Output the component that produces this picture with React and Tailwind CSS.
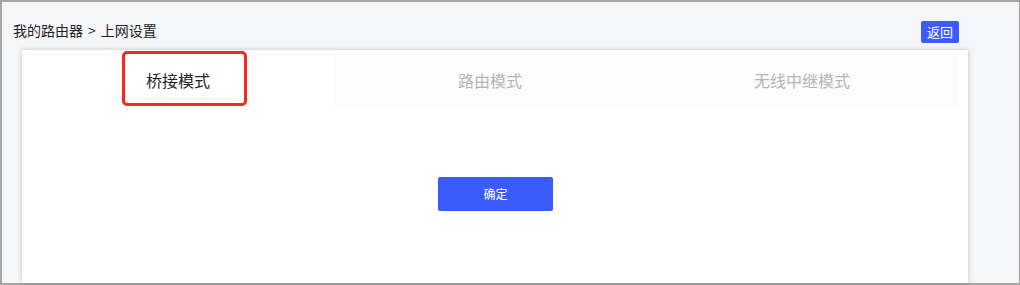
import React from "react";

export default function App() {
  const font = { fontFamily: '"Microsoft YaHei", "Noto Sans CJK SC", sans-serif' };
  return (
    <div className="w-[1020px] h-[285px] overflow-hidden bg-[#a6a6a6] pt-[2px] pl-[2px] pb-[2px] pr-[1px]" style={font}>
      <div className="relative w-full h-full bg-[#f5f6f8] flex flex-col">
        <div className="flex items-start h-[48px] pl-[11px] pr-[60px] justify-between">
          <div className="flex text-[14px] text-[#222] mt-[18px] leading-[20px]">
            <span>我的路由器</span>
            <span className="mx-[5px]">&gt;</span>
            <span>上网设置</span>
          </div>
          <button className="h-[22px] px-[6px] bg-[#3b5bfd] text-white text-[13px] rounded-[2px] leading-[22px] mt-[19px]">返回</button>
        </div>
        <div className="ml-[20px] w-[946px] flex-1 bg-white shadow-[0_0_5px_rgba(0,0,0,0.22)] pr-[10px]">
          <div className="flex h-[55px] mt-[2px]">
            <div className="w-[312px] flex items-center justify-center text-[16px] text-[#222]">桥接模式</div>
            <div className="w-[312px] flex items-center justify-center text-[16px] text-[#b5b5b5] bg-[#fcfcfc]">路由模式</div>
            <div className="w-[312px] flex items-center justify-center text-[16px] text-[#b5b5b5] bg-[#fcfcfc]">无线中继模式</div>
          </div>
          <div className="flex justify-center pt-[70px]">
            <button className="w-[115px] h-[34px] bg-[#3b5bfd] text-white text-[12px] rounded-[2px] ml-[11px]">确定</button>
          </div>
        </div>
        <div className="absolute left-[120px] top-[49px] w-[125px] h-[55px] border-[3px] border-[#f02a1e] rounded-[5px]"></div>
      </div>
    </div>
  );
}
